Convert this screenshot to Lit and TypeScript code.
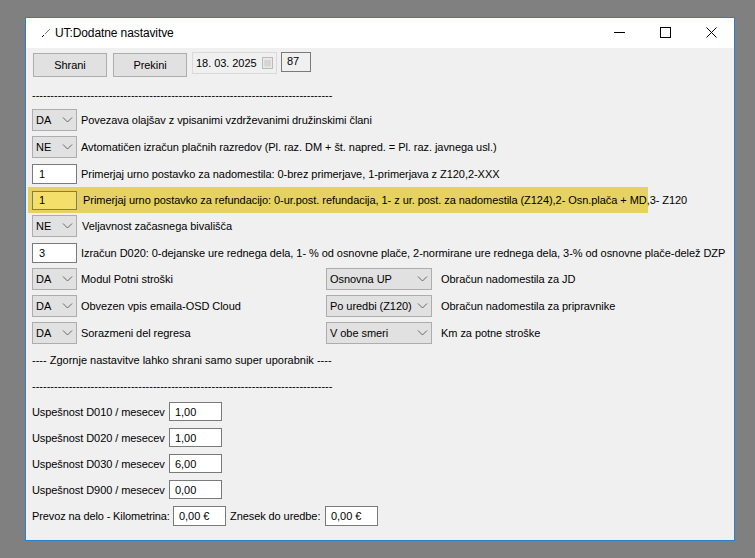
import { LitElement, html, css, svg } from 'lit';
import { customElement } from 'lit/decorators.js';

const DASHES = '-'.repeat(82);

const chevron = svg`<svg class="chev" width="11" height="6" viewBox="0 0 11 6"><path d="M1 .5 5.5 5 10 .5" fill="none" stroke="#666" stroke-width="1"/></svg>`;

@customElement('app-root')
export class AppRoot extends LitElement {
    static styles = css`
        :host {
            display: block;
            width: 755px;
            height: 558px;
            background: #808080;
            padding: 17px 0 0 25px;
            box-sizing: border-box;
            font: 11px "Liberation Sans", Arial, sans-serif;
            letter-spacing: -0.055px;
            color: #000;
        }

        .window {
            width: 710px;
            height: 524px;
            box-sizing: border-box;
            border: 1px solid #2a7dcf;
            background: #f0f0f0;
            overflow: hidden;
        }

        .titlebar {
            height: 30px;
            background: #fff;
            display: flex;
            align-items: center;
            padding-left: 15px;
        }

        .title {
            margin-left: 4px;
            font-size: 12px;
            letter-spacing: -0.1px;
            flex: 1;
        }

        .caption {
            width: 46px;
            height: 30px;
            box-sizing: border-box;
            padding-bottom: 2px;
            display: flex;
            align-items: center;
            justify-content: center;
        }

        .content {
            padding: 4px 0 0 6px;
        }

        .toolbar {
            display: flex;
            align-items: flex-start;
            height: 36px;
        }

        button {
            font: inherit;
            letter-spacing: inherit;
            color: #000;
            width: 74px;
            height: 24px;
            margin: 1px 5px 0 1px;
            padding: 0;
            background: #e1e1e1;
            border: 1px solid #adadad;
        }

        .date {
            width: 85px;
            height: 22px;
            box-sizing: border-box;
            border: 1px solid #d9d9d9;
            background: #f0f0f0;
            display: flex;
            align-items: center;
            padding-left: 3px;
            gap: 5px;
            margin-right: 4px;
            white-space: nowrap;
        }

        .num {
            width: 30px;
            height: 20px;
            box-sizing: border-box;
            border: 1px solid #7a7a7a;
            background: #f0f0f0;
            padding: 2px 0 0 5px;
        }

        .dash {
            height: 14px;
            line-height: 14px;
            white-space: nowrap;
            letter-spacing: 0;
        }

        .rows {
            margin-top: 7px;
            display: grid;
            grid-template-rows: 27px 28px 23px 28px 28px 25px 27px 27px 27px;
        }

        .row {
            display: flex;
            align-items: center;
            height: 22px;
            white-space: nowrap;
        }

        .row.entry {
            height: 20px;
        }

        .row .label {
            margin-left: 4px;
        }

        .row.wide .label {
            margin-left: 5px;
        }

        .row .label.far {
            margin-left: 9px;
        }

        .select {
            box-sizing: border-box;
            width: 45px;
            height: 22px;
            border: 1px solid #adadad;
            background: #e1e1e1;
            display: flex;
            align-items: center;
            justify-content: space-between;
            padding: 0 3px;
            flex: none;
        }

        .select.big {
            width: 106px;
        }

        .left {
            width: 294px;
            display: flex;
            align-items: center;
            flex: none;
        }

        .box {
            box-sizing: border-box;
            background: #fff;
            border: 1px solid #7a7a7a;
            height: 20px;
            flex: none;
            display: flex;
            align-items: center;
        }

        .box.code {
            width: 45px;
            padding-left: 6px;
        }

        .box.amount {
            width: 53px;
            height: 19px;
            padding-left: 5px;
            margin-left: 4px;
        }

        .box.money {
            height: 20px;
        }

        .row.hl {
            margin-left: -4px;
            width: 620px;
            height: 26px;
            padding-left: 4px;
            box-sizing: border-box;
            background: #e6d263;
        }

        .hl .box {
            height: 19px;
            background: #f5df6b;
        }

        .row.hl .label {
            margin-left: 6px;
        }

        .note {
            margin-top: 4px;
            height: 14px;
            line-height: 14px;
            letter-spacing: 0;
        }

        .dash.second {
            margin-top: 12px;
        }

        .amounts {
            margin-top: 9px;
            display: grid;
            grid-template-rows: repeat(4, 26px) 20px;
            white-space: nowrap;
        }

        .line {
            display: flex;
            align-items: center;
            height: 19px;
        }

        .line span {
            width: 133px;
            flex: none;
            letter-spacing: -0.08px;
        }

        .line.last {
            height: 20px;
        }

        .line.last .transport {
            width: 137px;
            letter-spacing: -0.12px;
        }

        .line.last .limit {
            width: 91px;
            margin-left: 4px;
        }
    `;

    renderSelect(value: string, big = false) {
        return html`<div class="select ${big ? 'big' : ''}"><span>${value}</span>${chevron}</div>`;
    }

    render() {
        return html`
            <div class="window">
                <div class="titlebar">
                    <svg width="10" height="10" viewBox="0 0 10 10">
                        <path d="M1 9 3 7" stroke="#000" fill="none"/>
                        <path d="M4 6 9 1" stroke="#777" fill="none"/>
                    </svg>
                    <span class="title">UT:Dodatne nastavitve</span>
                    <div class="caption">
                        <svg width="11" height="11" viewBox="0 0 11 11"><path d="M0 5.5h11" stroke="#000"/></svg>
                    </div>
                    <div class="caption">
                        <svg width="11" height="11" viewBox="0 0 11 11"><rect x=".5" y=".5" width="10" height="10" fill="none" stroke="#000"/></svg>
                    </div>
                    <div class="caption">
                        <svg width="11" height="11" viewBox="0 0 11 11"><path d="M.5.5l10 10M10.5.5l-10 10" stroke="#000" fill="none"/></svg>
                    </div>
                </div>
                <div class="content">
                    <div class="toolbar">
                        <button>Shrani</button>
                        <button>Prekini</button>
                        <div class="date">
                            <span>18. 03. 2025</span>
                            <svg width="11" height="12" viewBox="0 0 11 12">
                                <rect x=".5" y=".5" width="10" height="11" fill="#e8e8e8" stroke="#bbb"/>
                                <path d="M2 4h7M2 6h7M2 8h7M4 3v7M7 3v7" stroke="#ccc"/>
                            </svg>
                        </div>
                        <div class="num">87</div>
                    </div>
                    <div class="dash">${DASHES}</div>
                    <div class="rows">
                        <div class="row">${this.renderSelect('DA')}<span class="label">Povezava olajšav z vpisanimi vzdrževanimi družinskimi člani</span></div>
                        <div class="row">${this.renderSelect('NE')}<span class="label">Avtomatičen izračun plačnih razredov (Pl. raz. DM + št. napred. = Pl. raz. javnega usl.)</span></div>
                        <div class="row entry"><div class="box code">1</div><span class="label">Primerjaj urno postavko za nadomestila: 0-brez primerjave, 1-primerjava z Z120,2-XXX</span></div>
                        <div class="row hl"><div class="box code">1</div><span class="label">Primerjaj urno postavko za refundacijo: 0-ur.post. refundacija, 1- z ur. post. za nadomestila (Z124),2- Osn.plača + MD,3- Z120</span></div>
                        <div class="row wide">${this.renderSelect('NE')}<span class="label">Veljavnost začasnega bivališča</span></div>
                        <div class="row entry"><div class="box code">3</div><span class="label">Izračun D020: 0-dejanske ure rednega dela, 1- % od osnovne plače, 2-normirane ure rednega dela, 3-% od osnovne plače-delež DZP</span></div>
                        <div class="row">
                            <div class="left">${this.renderSelect('DA')}<span class="label">Modul Potni stroški</span></div>
                            ${this.renderSelect('Osnovna UP', true)}<span class="label far">Obračun nadomestila za JD</span>
                        </div>
                        <div class="row">
                            <div class="left">${this.renderSelect('DA')}<span class="label">Obvezen vpis emaila-OSD Cloud</span></div>
                            ${this.renderSelect('Po uredbi (Z120)', true)}<span class="label far">Obračun nadomestila za pripravnike</span>
                        </div>
                        <div class="row">
                            <div class="left">${this.renderSelect('DA')}<span class="label">Sorazmeni del regresa</span></div>
                            ${this.renderSelect('V obe smeri', true)}<span class="label far">Km za potne stroške</span>
                        </div>
                    </div>
                    <div class="note">---- Zgornje nastavitve lahko shrani samo super uporabnik ----</div>
                    <div class="dash second">${DASHES}</div>
                    <div class="amounts">
                        ${['1,00', '1,00', '6,00', '0,00'].map((v, i) => html`
                            <div class="line"><span>Uspešnost ${['D010', 'D020', 'D030', 'D900'][i]} / mesecev</span><div class="box amount">${v}</div></div>
                        `)}
                        <div class="line last">
                            <span class="transport">Prevoz na delo - Kilometrina:</span><div class="box amount money">0,00 €</div>
                            <span class="limit">Znesek do uredbe:</span><div class="box amount money">0,00 €</div>
                        </div>
                    </div>
                </div>
            </div>
        `;
    }
}
